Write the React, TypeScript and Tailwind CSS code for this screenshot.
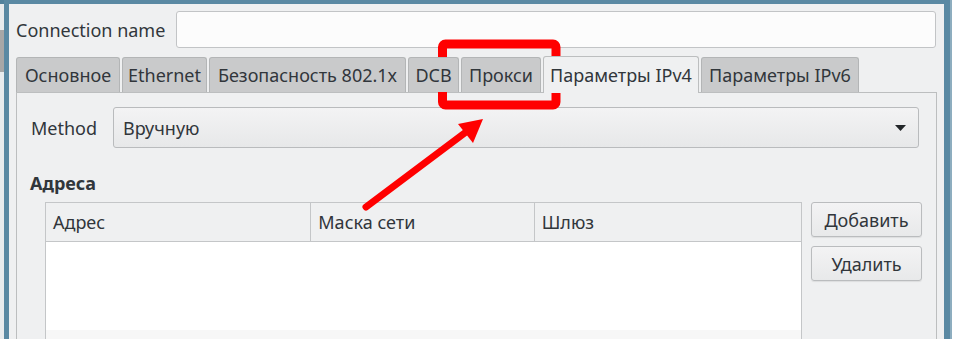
import { Fragment } from 'react';

interface Tab {
  label: string;
  width: number;
  active?: boolean;
}

const tabs: Tab[] = [
  { label: 'Основное', width: 104 },
  { label: 'Ethernet', width: 85 },
  { label: 'Безопасность 802.1x', width: 197 },
  { label: 'DCB', width: 51 },
  { label: 'Прокси', width: 80 },
  { label: 'Параметры IPv4', width: 156, active: true },
  { label: 'Параметры IPv6', width: 158 },
];

function TabBar() {
  return (
    <div className="flex items-end gap-[2px] h-[35px] relative z-10 shrink-0">
      {tabs.map((tab) => (
        <div
          key={tab.label}
          style={{ width: tab.width }}
          className={
            tab.active
              ? 'h-[37px] -mb-px flex items-center justify-center bg-[#eff0f1] border border-b-0 border-[#bcbebf] rounded-t-[3px]'
              : 'h-[35px] flex items-center justify-center bg-[#c9cacb] border border-b-0 border-[#b3b5b6] rounded-t-[3px]'
          }
        >
          <span className="whitespace-nowrap">{tab.label}</span>
        </div>
      ))}
    </div>
  );
}

function AddressTable() {
  const cols = [
    { label: 'Адрес', w: 265 },
    { label: 'Маска сети', w: 224 },
    { label: 'Шлюз', w: 268 },
  ];
  return (
    <div className="w-[757px] shrink-0 border border-b-0 border-[#c4c6c8] flex flex-col">
      <div className="flex h-[39px] shrink-0 bg-[#eff0f1] border-b border-[#c4c6c8]">
        {cols.map((c, i) => (
          <Fragment key={c.label}>
            {i > 0 && <div className="w-px bg-[#c4c6c8]" />}
            <div style={{ width: c.w - (i > 0 ? 1 : 0) }} className="flex items-center pl-[7px] whitespace-nowrap">
              {c.label}
            </div>
          </Fragment>
        ))}
      </div>
      <div className="h-[88px] shrink-0 bg-white" />
      <div className="h-[20px] shrink-0 bg-[#f7f7f7]" />
    </div>
  );
}

function Button({ label }: { label: string }) {
  return (
    <div className="w-[111px] h-[35px] shrink-0 flex items-center justify-center rounded-[3px] border border-[#babcbe] bg-gradient-to-b from-[#f3f3f4] to-[#e8e9ea] shadow-[0_1px_1px_rgba(0,0,0,0.08)]">
      {label}
    </div>
  );
}

function Annotation() {
  return (
    <svg className="absolute left-0 top-0 pointer-events-none" width="972" height="339">
      <rect x="442.5" y="44" width="113.5" height="61" rx="3" fill="none" stroke="#ff0000" strokeWidth="9" />
      <line x1="366" y1="207" x2="466" y2="132" stroke="#ff0000" strokeWidth="7" strokeLinecap="round" />
      <polygon points="483,119 458,124 473,143" fill="#ff0000" />
    </svg>
  );
}

export default function App() {
  return (
    <div className="w-[972px] h-[339px] bg-white flex items-start overflow-hidden relative text-[18px] leading-[24px] text-[#31363b] font-['Noto_Sans',sans-serif]">
      <div className="w-[4px] h-[339px] shrink-0 flex flex-col bg-[#e9ecee]">
        <div className="h-[4px] shrink-0 bg-sky-900/65" />
        <div className="h-[26px] shrink-0" />
        <div className="h-[42px] shrink-0 bg-[#a7a7a7]" />
      </div>

      {/* window frame */}
      <div className="w-[946px] h-[339px] shrink-0 flex flex-col">
        <div className="h-[4px] w-full shrink-0 bg-sky-900/65" />
        <div className="flex-1 flex">
          <div className="w-[5px] h-full shrink-0 bg-sky-900/65" />
          <div className="w-[933px] h-full shrink-0 bg-[#eff0f1] pl-[7px] pr-[5px] flex flex-col overflow-hidden">
            <div className="mt-[7px] h-[37px] shrink-0 flex items-center">
              <div className="w-[160px] whitespace-nowrap">Connection name</div>
              <div className="flex-1 h-full mr-[1px] rounded-[3px] border border-[#c2c4c6] bg-[#fcfcfc]" />
            </div>

            <div className="mt-[9px] shrink-0">
              <TabBar />
            </div>

            <div className="shrink-0 h-[260px] border border-b-0 border-[#bcbebf] bg-[#eff0f1] pl-[13px] pr-[17px] pt-[14px] flex flex-col">
              <div className="flex items-center h-[41px] shrink-0">
                <div className="w-[83px] pl-[1px]">Method</div>
                <div className="flex-1 h-full flex items-center justify-between pl-[9px] pr-[12px] rounded-[3px] border border-[#b9bbbd] bg-gradient-to-b from-[#f3f3f4] to-[#e7e8e9]">
                  <span>Вручную</span>
                  <svg width="11" height="6" viewBox="0 0 11 6">
                    <polygon points="0,0 11,0 5.5,6" fill="#232629" />
                  </svg>
                </div>
              </div>

              <div className="mt-[24px] h-[22px] shrink-0 flex items-center font-bold">Адреса</div>

              <div className="mt-[8px] shrink-0 flex items-start gap-[9px] pl-[15px]">
                <AddressTable />
                <div className="flex flex-col gap-[9px]">
                  <Button label="Добавить" />
                  <Button label="Удалить" />
                </div>
              </div>
            </div>
          </div>
          <div className="w-[2px] h-full shrink-0 bg-[#eff0f1]" />
          <div className="w-[6px] h-full shrink-0 bg-sky-900/65" />
        </div>
      </div>
      <div className="w-[2px] h-[339px] shrink-0 bg-sky-900/45" />

      <Annotation />
    </div>
  );
}
